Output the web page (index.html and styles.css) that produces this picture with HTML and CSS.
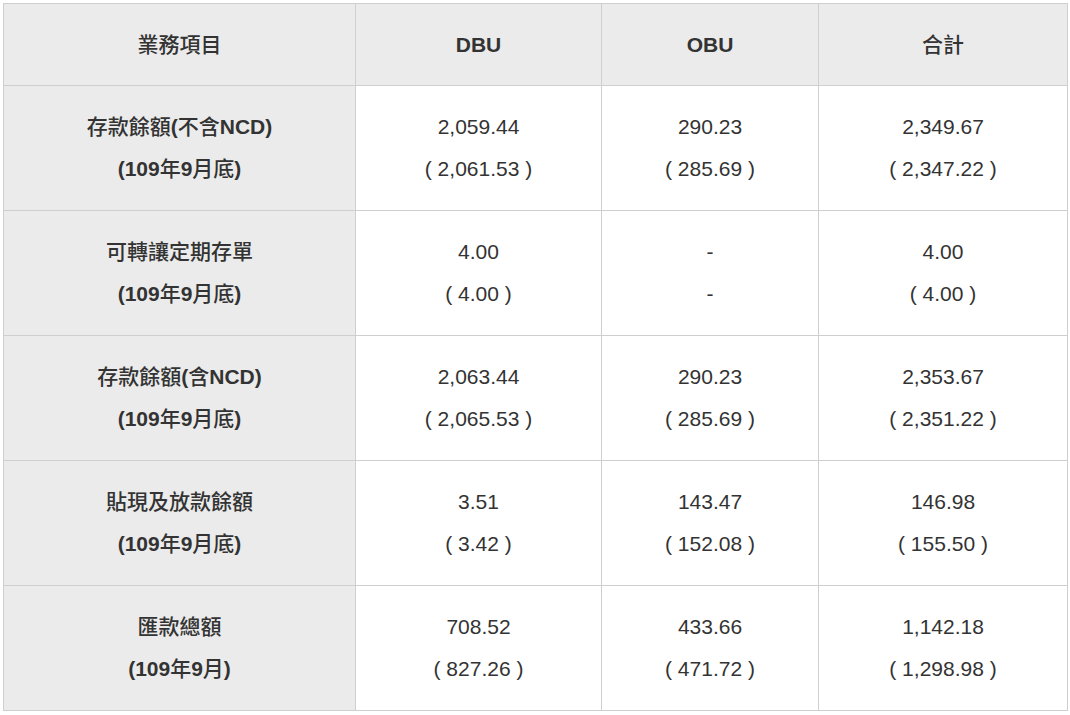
FILE: index.html
```html
<!DOCTYPE html>
<html lang="zh-Hant">
<head>
<meta charset="utf-8">
<title>業務統計</title>
<link rel="stylesheet" href="styles.css">
</head>
<body>
<table class="stats">
  <colgroup>
    <col class="c1"><col class="c2"><col class="c3"><col class="c4">
  </colgroup>
  <thead>
    <tr>
      <th>業務項目</th>
      <th><b>DBU</b></th>
      <th><b>OBU</b></th>
      <th>合計</th>
    </tr>
  </thead>
  <tbody>
    <tr>
      <th>存款餘額<b>(</b>不含<b>NCD)</b><br><b>(109</b>年<b>9</b>月底<b>)</b></th>
      <td>2,059.44<br>( 2,061.53 )</td>
      <td>290.23<br>( 285.69 )</td>
      <td>2,349.67<br>( 2,347.22 )</td>
    </tr>
    <tr>
      <th>可轉讓定期存單<br><b>(109</b>年<b>9</b>月底<b>)</b></th>
      <td>4.00<br>( 4.00 )</td>
      <td>-<br>-</td>
      <td>4.00<br>( 4.00 )</td>
    </tr>
    <tr>
      <th>存款餘額<b>(</b>含<b>NCD)</b><br><b>(109</b>年<b>9</b>月底<b>)</b></th>
      <td>2,063.44<br>( 2,065.53 )</td>
      <td>290.23<br>( 285.69 )</td>
      <td>2,353.67<br>( 2,351.22 )</td>
    </tr>
    <tr>
      <th>貼現及放款餘額<br><b>(109</b>年<b>9</b>月底<b>)</b></th>
      <td>3.51<br>( 3.42 )</td>
      <td>143.47<br>( 152.08 )</td>
      <td>146.98<br>( 155.50 )</td>
    </tr>
    <tr>
      <th>匯款總額<br><b>(109</b>年<b>9</b>月<b>)</b></th>
      <td>708.52<br>( 827.26 )</td>
      <td>433.66<br>( 471.72 )</td>
      <td>1,142.18<br>( 1,298.98 )</td>
    </tr>
  </tbody>
</table>
</body>
</html>
```

FILE: styles.css
```css
html, body {
  margin: 0;
  padding: 0;
  background: #ffffff;
}
body {
  padding: 3px;
  font-family: "Liberation Sans", "Noto Sans CJK TC", sans-serif;
  color: #333333;
}
.stats {
  border-collapse: collapse;
  width: 1064px;
  table-layout: fixed;
}
.c1 { width: 352px; }
.c2 { width: 246px; }
.c3 { width: 217px; }
.c4 { width: 249px; }
.stats th,
.stats td {
  border: 1px solid #cfcfcf;
  padding: 20px 8px;
  text-align: center;
  vertical-align: middle;
  font-size: 21px;
  line-height: 42px;
  font-weight: normal;
}
.stats thead th {
  background: #ebebeb;
  padding-bottom: 19px;
}
.stats th {
  font-weight: 500;
}
.stats tbody th {
  background: #ebebeb;
}
.stats td {
  background: #ffffff;
}
.stats b {
  font-weight: bold;
}
```
